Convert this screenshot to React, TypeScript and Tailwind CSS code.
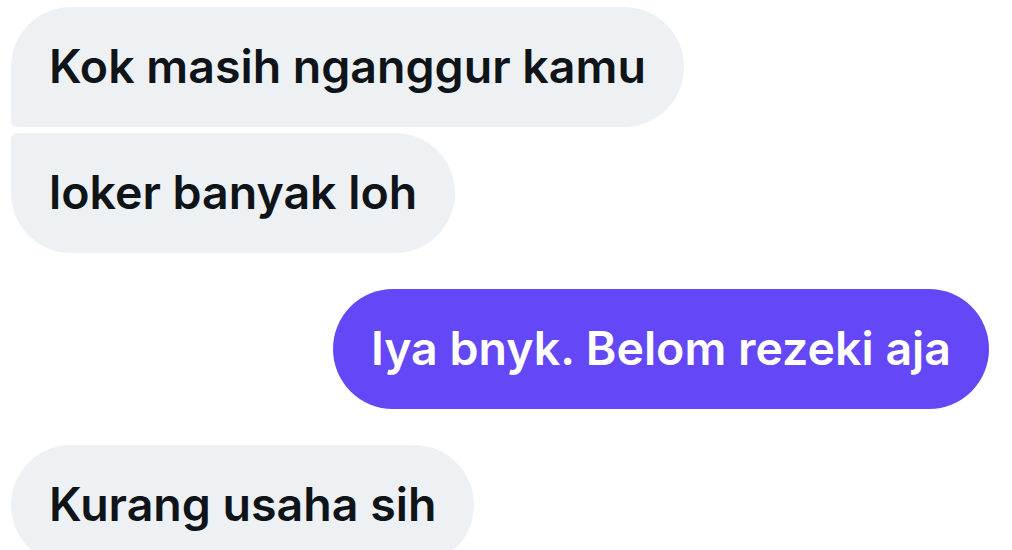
export default function App() {
  return (
    <div
      className="w-[1012px] h-[550px] overflow-hidden bg-white pt-[7px]"
      style={{ fontFamily: 'Inter, "Noto Sans", sans-serif' }}
    >
      <div className="flex flex-col items-start pl-[11px] gap-[6px]">
        <div className="h-[120px] flex items-center px-[38px] bg-[#eef1f4] text-[#0f1419] text-[46.5px] font-semibold rounded-tl-[60px] rounded-tr-[60px] rounded-br-[60px] rounded-bl-[6px] whitespace-nowrap">
          Kok masih nganggur kamu
        </div>
        <div className="h-[120px] flex items-center px-[38px] bg-[#eef1f4] text-[#0f1419] text-[46.5px] font-semibold rounded-tl-[6px] rounded-tr-[60px] rounded-br-[60px] rounded-bl-[60px] whitespace-nowrap">
          loker banyak loh
        </div>
      </div>
      <div className="flex justify-end pr-[23px] mt-[36px]">
        <div className="h-[120px] flex items-center px-[38px] bg-[#6447f7] text-white text-[46.5px] font-semibold rounded-[60px] whitespace-nowrap">
          Iya bnyk. Belom rezeki aja
        </div>
      </div>
      <div className="flex pl-[11px] mt-[36px]">
        <div className="h-[120px] flex items-center px-[38px] bg-[#eef1f4] text-[#0f1419] text-[46.5px] font-semibold rounded-[60px] whitespace-nowrap">
          Kurang usaha sih
        </div>
      </div>
    </div>
  );
}
